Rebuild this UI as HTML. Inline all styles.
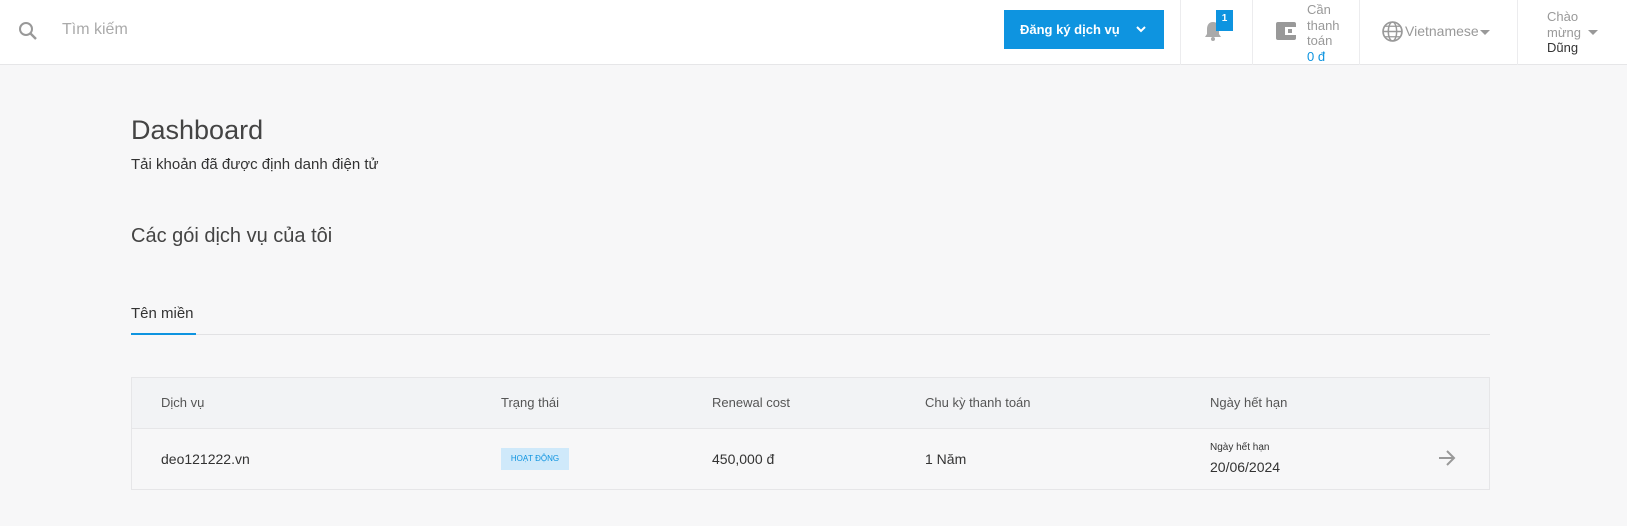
<!DOCTYPE html><html><head><meta charset="utf-8"><style>
*{margin:0;padding:0;box-sizing:border-box}
body{width:1627px;height:526px;background:#f7f7f8;font-family:"Liberation Sans",Arial,sans-serif;color:#333;position:relative;overflow:hidden}
.a{position:absolute;white-space:nowrap}
.hdr{position:absolute;left:0;top:0;width:1627px;height:65px;background:#fff;border-bottom:1px solid #e6e6e8}
.div{position:absolute;top:0;width:1px;height:65px;background:#ececee}
.caret{position:absolute;width:0;height:0;border-left:5px solid transparent;border-right:5px solid transparent;border-top:5px solid #999}
.th{position:absolute;top:395px;font-size:13px;color:#555}
.td{position:absolute;top:451px;font-size:14px;color:#333}
</style></head><body>
<div class="hdr">
<svg class="a" style="left:18px;top:21px" width="20" height="20" viewBox="0 0 20 20"><circle cx="8" cy="8" r="6" fill="none" stroke="#999" stroke-width="2"/><line x1="12.5" y1="12.5" x2="18" y2="18" stroke="#999" stroke-width="2.4"/></svg>
<div class="a" style="left:62px;top:21px;font-size:16px;color:#aaa">Tìm kiếm</div>
<div class="a" style="left:1004px;top:10px;width:160px;height:39px;background:#0e94e0;color:#fff;font-size:13px;font-weight:bold;line-height:39px;padding-left:16px">Đăng ký dịch vụ
<svg style="position:absolute;left:131px;top:15px" width="12" height="9" viewBox="0 0 12 9"><path d="M2 2l4 4 4-4" stroke="#fff" stroke-width="2" fill="none"/></svg></div>
<div class="div" style="left:1180px"></div><div class="div" style="left:1252px"></div><div class="div" style="left:1359px"></div><div class="div" style="left:1517px"></div>
<svg class="a" style="left:1203px;top:20px" width="20" height="22" viewBox="0 0 20 22"><path d="M10 2c-4 0-6 3-6 7v5l-2 3h16l-2-3V9c0-4-2-7-6-7z" fill="#aaa"/><circle cx="10" cy="19" r="2" fill="#aaa"/></svg>
<div class="a" style="left:1216px;top:10px;width:17px;height:21px;background:#0e94e0;color:#fff;font-size:10px;font-weight:bold;text-align:center;line-height:18px">1</div>
<svg class="a" style="left:1276px;top:22px" width="20" height="18" viewBox="0 0 20 18"><rect x="0" y="0" width="20" height="18" rx="2" fill="#999"/><rect x="9" y="5" width="11" height="8" fill="#fff"/><rect x="12" y="7" width="4" height="4" fill="#999"/></svg>
<div class="a" style="left:1307px;top:2px;font-size:13px;line-height:15.5px;color:#999">Cần<br>thanh<br>toán<br><span style="color:#0e94e0">0 đ</span></div>
<svg class="a" style="left:1382px;top:21px" width="21" height="21" viewBox="0 0 20 20"><circle cx="10" cy="10" r="9" fill="none" stroke="#999" stroke-width="1.6"/><ellipse cx="10" cy="10" rx="4" ry="9" fill="none" stroke="#999" stroke-width="1.4"/><line x1="1" y1="10" x2="19" y2="10" stroke="#999" stroke-width="1.4"/><line x1="3" y1="5" x2="17" y2="5" stroke="#999" stroke-width="1.2"/><line x1="3" y1="15" x2="17" y2="15" stroke="#999" stroke-width="1.2"/></svg>
<div class="a" style="left:1405px;top:23px;font-size:14px;color:#999">Vietnamese</div>
<div class="caret" style="left:1480px;top:30px"></div>
<div class="a" style="left:1547px;top:9px;font-size:13px;line-height:15.5px;color:#999">Chào<br>mừng<br><span style="color:#333">Dũng</span></div>
<div class="caret" style="left:1588px;top:30px"></div>
</div>
<div class="a" style="left:131px;top:115px;font-size:27px;color:#444">Dashboard</div>
<div class="a" style="left:131px;top:156px;font-size:15px;color:#333">Tải khoản đã được định danh điện tử</div>
<div class="a" style="left:131px;top:225px;font-size:20px;color:#444">Các gói dịch vụ của tôi</div>
<div class="a" style="left:131px;top:305px;font-size:15px;color:#333">Tên miền</div>
<div class="a" style="left:131px;top:334px;width:1359px;height:1px;background:#e2e2e4"></div>
<div class="a" style="left:131px;top:333px;width:65px;height:2px;background:#0e94e0"></div>
<div class="a" style="left:131px;top:377px;width:1359px;height:113px;border:1px solid #e6e6e8;background:#f7f7f8"></div>
<div class="a" style="left:132px;top:378px;width:1357px;height:51px;background:#f2f3f5;border-bottom:1px solid #e6e6e8"></div>
<div class="th" style="left:161px">Dịch vụ</div><div class="th" style="left:501px">Trạng thái</div><div class="th" style="left:712px">Renewal cost</div><div class="th" style="left:925px">Chu kỳ thanh toán</div><div class="th" style="left:1210px">Ngày hết hạn</div>
<div class="td" style="left:161px">deo121222.vn</div>
<div class="a" style="left:501px;top:448px;width:68px;height:22px;background:#cfe9fa;color:#0e94e0;font-size:8px;text-align:center;line-height:22px">HOẠT ĐỘNG</div>
<div class="td" style="left:712px">450,000 đ</div><div class="td" style="left:925px">1 Năm</div>
<div class="a" style="left:1210px;top:442px;font-size:10px;color:#333">Ngày hết hạn</div>
<div class="a" style="left:1210px;top:459px;font-size:14px;color:#333">20/06/2024</div>
<svg class="a" style="left:1437px;top:449px" width="20" height="18" viewBox="0 0 20 18"><path d="M2 9h15M10 2l7 7-7 7" stroke="#999" stroke-width="2" fill="none"/></svg>
</body></html>
